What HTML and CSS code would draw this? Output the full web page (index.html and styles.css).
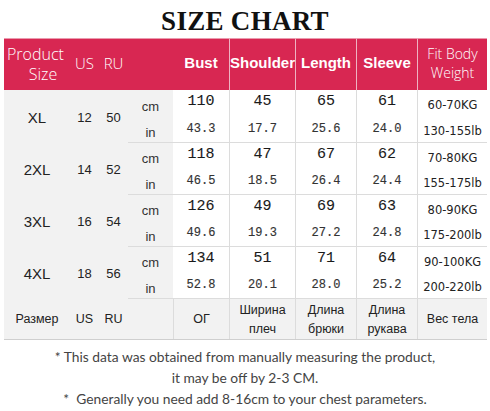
FILE: index.html
```html
<!DOCTYPE html>
<html>
<head>
<meta charset="utf-8">
<link rel="stylesheet" href="styles.css">
</head>
<body>
<div class="page">
  <h1 class="title">SIZE CHART</h1>
  <div class="chart">
    <div class="h h-light h-prod"><span>Product<br><span class="ind">Size</span></span></div>
    <div class="h h-light">US</div>
    <div class="h h-light">RU</div>
    <div class="h"></div>
    <div class="h h-bold">Bust</div>
    <div class="h h-bold h-sep">Shoulder</div>
    <div class="h h-bold h-sep">Length</div>
    <div class="h h-bold h-sep">Sleeve</div>
    <div class="h h-light h-sep h-fit">Fit Body<br>Weight</div>

    <div class="c size">XL</div><div class="c us">12</div><div class="c ru">50</div>
    <div class="c unit cmu">cm</div><div class="c v cmv">110</div><div class="c v cmv sep">45</div><div class="c v cmv sep">65</div><div class="c v cmv sep">61</div><div class="c fit cmf sep">60-70KG</div>
    <div class="c unit inu">in</div><div class="c v inv">43.3</div><div class="c v inv sep">17.7</div><div class="c v inv sep">25.6</div><div class="c v inv sep">24.0</div><div class="c fit inf sep">130-155lb</div>

    <div class="c size">2XL</div><div class="c us">14</div><div class="c ru">52</div>
    <div class="c unit cmu top">cm</div><div class="c v cmv top">118</div><div class="c v cmv sep top">47</div><div class="c v cmv sep top">67</div><div class="c v cmv sep top">62</div><div class="c fit cmf sep top">70-80KG</div>
    <div class="c unit inu">in</div><div class="c v inv">46.5</div><div class="c v inv sep">18.5</div><div class="c v inv sep">26.4</div><div class="c v inv sep">24.4</div><div class="c fit inf sep">155-175lb</div>

    <div class="c size">3XL</div><div class="c us">16</div><div class="c ru">54</div>
    <div class="c unit cmu top">cm</div><div class="c v cmv top">126</div><div class="c v cmv sep top">49</div><div class="c v cmv sep top">69</div><div class="c v cmv sep top">63</div><div class="c fit cmf sep top">80-90KG</div>
    <div class="c unit inu">in</div><div class="c v inv">49.6</div><div class="c v inv sep">19.3</div><div class="c v inv sep">27.2</div><div class="c v inv sep">24.8</div><div class="c fit inf sep">175-200lb</div>

    <div class="c size">4XL</div><div class="c us">18</div><div class="c ru">56</div>
    <div class="c unit cmu top">cm</div><div class="c v cmv top">134</div><div class="c v cmv sep top">51</div><div class="c v cmv sep top">71</div><div class="c v cmv sep top">64</div><div class="c fit cmf sep top">90-100KG</div>
    <div class="c unit inu">in</div><div class="c v inv">52.8</div><div class="c v inv sep">20.1</div><div class="c v inv sep">28.0</div><div class="c v inv sep">25.2</div><div class="c fit inf sep">200-220lb</div>

    <div class="f">Размер</div><div class="f">US</div><div class="f">RU</div><div class="f f-top"></div>
    <div class="f f-top sep">ОГ</div><div class="f f-top sep">Ширина<br>плеч</div><div class="f f-top sep">Длина<br>брюки</div><div class="f f-top sep">Длина<br>рукава</div><div class="f f-top sep">Вес тела</div>
  </div>
  <div class="notes">
    <p>* This data was obtained from manually measuring the product,</p>
    <p>it may be off by 2-3 CM.</p>
    <p>*&nbsp; Generally you need add 8-16cm to your chest parameters.</p>
  </div>
</div>
</body>
</html>
```

FILE: styles.css
```css
html, body {
  margin: 0;
  padding: 0;
  background: #fff;
}

.page {
  width: 490px;
  height: 411px;
  overflow: hidden;
}

.title {
  margin: 0;
  height: 38px;
  display: flex;
  align-items: center;
  justify-content: center;
  padding-top: 4px;
  box-sizing: border-box;
  font-family: "Liberation Serif", "Times New Roman", serif;
  font-weight: bold;
  font-size: 27px;
  color: #111;
  letter-spacing: 0.3px;
}

.chart {
  margin: 0 3px 0 4px;
  display: grid;
  grid-template-columns: 66px 29px 29px 45px 56px 66px 61px 61px 70px;
  grid-template-rows: 52px repeat(8, 26px) 41px;
  border-bottom: 1px solid #cfcfcf;
}

.h {
  background: #d82752;
  color: #fff;
  display: flex;
  align-items: center;
  justify-content: center;
  text-align: center;
  border-top: 1px solid #ea9aae;
  padding-bottom: 4px;
}

.h-light {
  font-family: "Open Sans", "DejaVu Sans", sans-serif;
  font-weight: 300;
  font-size: 15px;
  line-height: 20px;
}

.h-prod {
  font-size: 16px;
  justify-content: flex-start;
  padding-left: 3px;
  padding-bottom: 2px;
}

.h-prod .ind {
  padding-left: 15px;
}

.h-fit {
  font-size: 14px;
  line-height: 19px;
}

.h-bold {
  font-family: "Liberation Sans", Arial, sans-serif;
  font-weight: bold;
  font-size: 15px;
}

.h-sep {
  border-left: 1px solid #eeb3c2;
}

.c {
  display: flex;
  align-items: center;
  justify-content: center;
  font-family: "Liberation Sans", Arial, sans-serif;
  color: #222;
}

.size, .us, .ru {
  grid-row: span 2;
  background: #f2f2f2;
  padding-top: 2px;
}

.size {
  font-size: 15px;
}

.us, .ru {
  font-size: 13px;
}

.unit {
  background: #f2f2f2;
  font-size: 13px;
  color: #333;
}

.cmu {
  padding-top: 6px;
}

.inu {
  padding-top: 6px;
}

.v {
  font-family: "Liberation Mono", "Courier New", monospace;
  color: #1a1a1a;
}

.cmv {
  font-size: 15px;
  padding-bottom: 3px;
  -webkit-text-stroke: 0.1px #1a1a1a;
}

.inv {
  font-size: 12px;
  color: #333;
  -webkit-text-stroke: 0.15px #333;
}

.fit {
  font-family: "DejaVu Sans", sans-serif;
  font-size: 11.5px;
  color: #222;
}

.cmf {
  padding-top: 4px;
}

.inf {
  padding-top: 4px;
}

.sep {
  border-left: 1px solid #dcdcdc;
}

.top {
  border-top: 1px solid #dcdcdc;
}

.f {
  background: #f2f2f2;
  display: flex;
  align-items: center;
  justify-content: center;
  text-align: center;
  font-family: "Liberation Sans", Arial, sans-serif;
  font-size: 12.5px;
  line-height: 19px;
  color: #222;
  padding-top: 1px;
}

.f-top {
  border-top: 1px solid #dcdcdc;
}

.notes {
  padding-top: 6px;
  font-family: "Lato", "Open Sans", sans-serif;
  font-size: 13.8px;
  color: #444;
  text-align: center;
}

.notes p {
  margin: 0;
  line-height: 21px;
}
```
